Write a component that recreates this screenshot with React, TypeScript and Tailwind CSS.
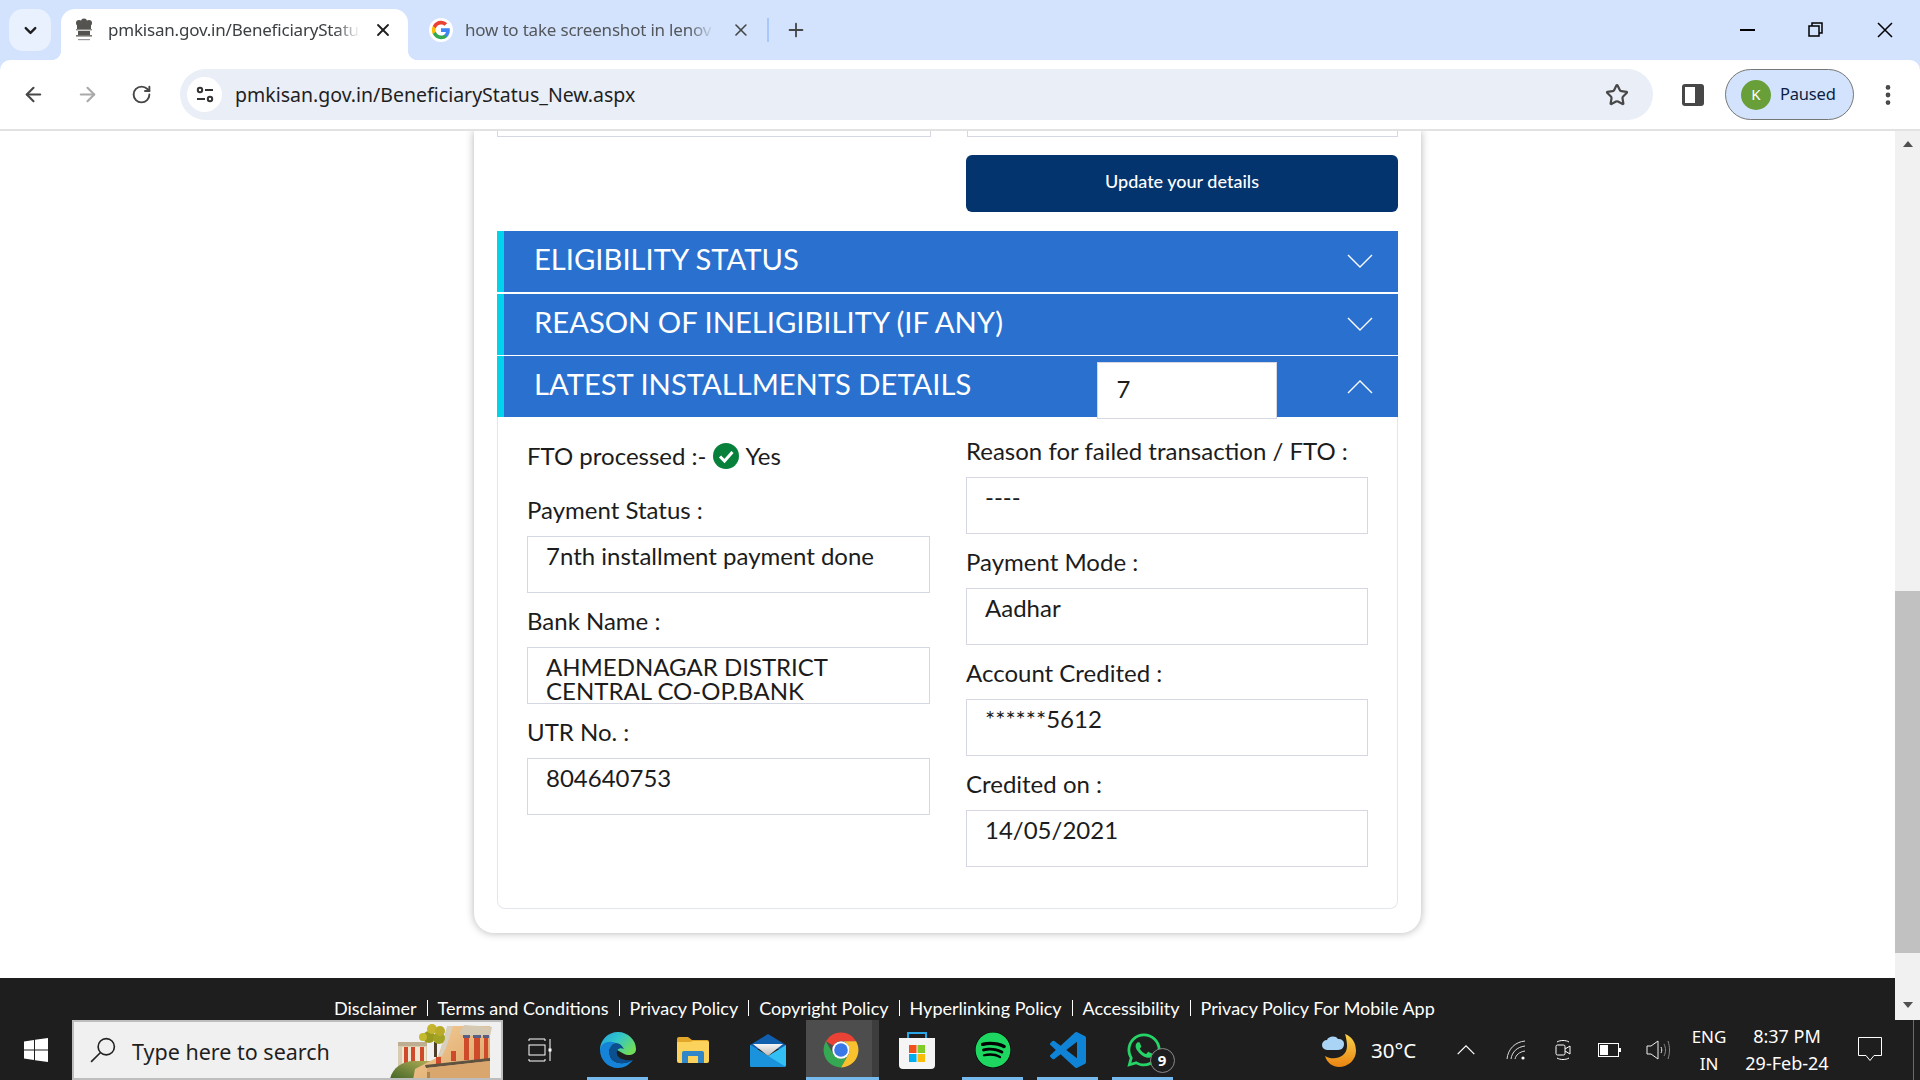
import { ArrowLeft, ArrowRight, ChevronDown, EllipsisVertical, Plus, RotateCw, Star, X } from "lucide-react";
import { FaSpotify, FaWhatsapp } from "react-icons/fa";

const Emblem = () => (
  <svg viewBox="0 0 22 24" className="h-[24px] w-[22px] shrink-0">
    <g fill="#55534f">
      <circle cx="11" cy="3.5" r="3" />
      <circle cx="6" cy="5" r="3" />
      <circle cx="16" cy="5" r="3" />
      <rect x="4" y="6" width="14" height="5" />
      <rect x="3" y="11" width="16" height="1.4" fill="#8a8a86" />
      <rect x="5" y="13" width="12" height="4" />
      <rect x="3" y="17" width="16" height="1.6" fill="#77756f" />
      <rect x="5" y="21" width="12" height="1.2" fill="#999" />
    </g>
  </svg>
);

const GoogleG = () => (
  <span className="flex h-[24px] w-[24px] shrink-0 items-center justify-center rounded-full bg-white">
    <svg viewBox="0 0 24 24" className="h-[20px] w-[20px]">
      <path fill="#4285F4" d="M22.56 12.25c0-.78-.07-1.53-.2-2.25H12v4.26h5.92c-.26 1.37-1.04 2.53-2.21 3.31v2.77h3.57c2.08-1.92 3.28-4.74 3.28-8.09z" />
      <path fill="#34A853" d="M12 23c2.97 0 5.46-.98 7.28-2.66l-3.57-2.77c-.98.66-2.23 1.06-3.71 1.06-2.86 0-5.29-1.93-6.16-4.53H2.18v2.84C3.99 20.53 7.7 23 12 23z" />
      <path fill="#FBBC05" d="M5.84 14.09c-.22-.66-.35-1.36-.35-2.09s.13-1.43.35-2.09V7.07H2.18C1.43 8.55 1 10.22 1 12s.43 3.45 1.18 4.93l2.85-2.22.81-.62z" />
      <path fill="#EA4335" d="M12 5.38c1.62 0 3.06.56 4.21 1.64l3.15-3.15C17.45 2.09 14.97 1 12 1 7.7 1 3.99 3.47 2.18 7.07l3.66 2.84c.87-2.6 3.3-4.53 6.16-4.53z" />
    </svg>
  </span>
);

const TabStrip = () => (
  <div className="flex h-[60px] shrink-0 items-start bg-[#d3e3fd] pl-[9px] pt-[9px] font-['Noto_Sans',sans-serif] text-[#444746]">
    <div className="flex h-[42px] w-[42px] items-center justify-center rounded-[14px] bg-[#e9f1fe]">
      <ChevronDown size={19} strokeWidth={3} className="text-[#1f1f1f]" />
    </div>
    <div className="relative ml-[10px] flex h-[51px] w-[347px] items-center rounded-t-[14px] bg-white pb-[9px] pl-[12px]">
      <span className="absolute bottom-0 left-[-10px] h-[10px] w-[10px] bg-[radial-gradient(circle_at_0_0,transparent_10px,white_10.5px)]" />
      <span className="absolute bottom-0 right-[-10px] h-[10px] w-[10px] bg-[radial-gradient(circle_at_100%_0,transparent_10px,white_10.5px)]" />
      <Emblem />
      <span className="ml-[13px] w-[252px] whitespace-nowrap text-[17px] tracking-[-0.2px] text-[#3c4043] [mask-image:linear-gradient(to_right,black_90%,transparent)]">
        pmkisan.gov.in/BeneficiaryStatu
      </span>
      <X size={20} strokeWidth={2.2} className="ml-[13px] text-[#1f1f1f]" />
    </div>
    <div className="flex h-[42px] w-[361px] items-center pl-[21px]">
      <GoogleG />
      <span className="ml-[12px] w-[251px] whitespace-nowrap text-[17px] tracking-[-0.2px] text-[#54575b] [mask-image:linear-gradient(to_right,black_90%,transparent)]">
        how to take screenshot in lenov
      </span>
      <X size={20} strokeWidth={2} className="ml-[17px] text-[#444746]" />
      <span className="ml-[16px] h-[24px] w-[2px] bg-[#a8c7fa]" />
    </div>
    <div className="flex h-[42px] items-center pl-[16px]">
      <Plus size={22} strokeWidth={2} className="text-[#444746]" />
    </div>
    <div className="ml-auto flex h-[41px] items-center pr-[27px]">
      <span className="h-[2px] w-[15px] bg-black" />
      <svg viewBox="0 0 15 15" className="ml-[53px] h-[15px] w-[15px]" fill="none" stroke="black" strokeWidth="1.5">
        <rect x="1" y="4" width="10" height="10" />
        <path d="M4 4V1h10v10h-3" />
      </svg>
      <svg viewBox="0 0 16 16" className="ml-[54px] h-[16px] w-[16px]" fill="none" stroke="black" strokeWidth="1.5">
        <path d="M1 1l14 14M15 1L1 15" />
      </svg>
    </div>
  </div>
);

const Toolbar = () => (
  <div className="flex h-[71px] shrink-0 items-start bg-[#d3e3fd] font-['Noto_Sans',sans-serif]">
    <div className="flex h-[71px] w-full items-start rounded-t-[10px] border-b-2 border-[#e2e2e2] bg-white pt-[9px]">
      <div className="flex h-[51px] items-center pl-[22px]">
        <ArrowLeft size={23} strokeWidth={2.2} className="text-[#474747]" />
        <ArrowRight size={23} strokeWidth={2.2} className="ml-[31px] text-[#a9a9a9]" />
        <RotateCw size={21} strokeWidth={2.2} className="ml-[32px] text-[#474747]" />
      </div>
      <div className="ml-[28px] flex h-[51px] w-[1473px] items-center rounded-full bg-[#eaeef7] pl-[7px] pr-[24px]">
        <span className="flex h-[35px] w-[35px] items-center justify-center rounded-full bg-white">
          <svg viewBox="0 0 20 20" className="h-[20px] w-[20px]" fill="none" stroke="#333" strokeWidth="2">
            <circle cx="5" cy="5" r="2.2" />
            <path d="M10 5h8M2 14h8" />
            <circle cx="15" cy="14" r="2.2" />
          </svg>
        </span>
        <span className="ml-[13px] whitespace-nowrap text-[19.5px] text-[#1f1f1f]">pmkisan.gov.in/BeneficiaryStatus_New.aspx</span>
        <Star size={24} strokeWidth={2.2} className="ml-auto text-[#474747]" />
      </div>
      <div className="flex h-[51px] items-center">
        <svg viewBox="0 0 22 22" className="ml-[29px] h-[22px] w-[22px]">
          <rect x="0" y="0" width="22" height="22" rx="3" fill="#474747" />
          <rect x="3" y="3" width="10" height="16" fill="white" />
        </svg>
        <div className="ml-[21px] flex h-[51px] w-[129px] items-center rounded-full border border-[#747775] bg-[#d3e3fd] pl-[15px]">
          <span className="flex h-[30px] w-[30px] items-center justify-center rounded-full bg-[#689f38] text-[15px] text-white">K</span>
          <span className="ml-[9px] text-[16.5px] tracking-[-0.2px] text-[#0b1d43]">Paused</span>
        </div>
        <EllipsisVertical size={26} strokeWidth={2.4} className="ml-[21px] text-[#474747]" />
      </div>
    </div>
  </div>
);

const Field = ({ label, children }: { label: string; children: React.ReactNode }) => (
  <div className="mb-[15px]">
    <div className="mb-[9px] h-[30px] text-[24px] leading-[26px] text-[#1c1c1c]">{label}</div>
    <div className="h-[57px] overflow-hidden border border-[#d5d8e3] pl-[18px] pt-[7px] text-[24px] leading-[24px] text-[#1c1c1c]">
      {children}
    </div>
  </div>
);

const Chevron = ({ up, small }: { up?: boolean; small?: boolean }) => (
  <svg viewBox="0 0 26 14" className={small ? "h-[10px] w-[18px]" : "h-[14px] w-[26px]"} fill="none" stroke="white" strokeWidth={small ? 1.8 : 1.4}>
    <path d={up ? "M1 13L13 1l12 12" : "M1 1l12 12L25 1"} />
  </svg>
);

const AccordionRow = ({ title, open, children }: { title: string; open?: boolean; children?: React.ReactNode }) => (
  <div className="flex h-[61px] items-center border-l-[7px] border-[#00d4ec] bg-[#2970cf] pl-[30px] text-white">
    <span className="pb-[6px] text-[29.2px] leading-none">{title}</span>
    {children}
    <span className={`ml-auto pr-[25px] ${open ? "" : "pb-[2px]"}`}>
      <Chevron up={open} />
    </span>
  </div>
);

const PageCard = () => (
  <div className="ml-[474px] w-[947px] rounded-b-[20px] bg-white px-[23px] pb-[24px] shadow-[0_0_8px_rgba(0,0,0,0.3)]">
    <div className="flex gap-[36px]">
      <div className="h-[6px] w-[434px] border-x border-b border-[#d5d8e3]" />
      <div className="h-[6px] w-[432px] border-x border-b border-[#d5d8e3]" />
    </div>
    <div className="mt-[18px] flex justify-end">
      <div className="flex h-[57px] w-[432px] items-center justify-center rounded-[6px] bg-[#03346e] pb-[5px] text-[18px] font-medium text-white">Update your details</div>
    </div>
    <div className="mt-[19px]">
      <AccordionRow title="ELIGIBILITY STATUS" />
      <div className="h-[2px]" />
      <AccordionRow title="REASON OF INELIGIBILITY (IF ANY)" />
      <div className="h-px" />
      <AccordionRow title="LATEST INSTALLMENTS DETAILS" open>
        <div className="relative ml-[126px] h-[57px] w-[180px] translate-y-[4px] border border-[#d5d8e3] bg-white pl-[18px] pt-[10px] text-[24px] leading-[32px] text-[#1c1c1c]">7</div>
      </AccordionRow>
    </div>
    <div className="flex gap-[36px] rounded-b-[8px] border-x border-b border-[#e3e6ec] pb-[26px] pl-[29px]">
      <div className="w-[403px] pt-[23px]">
        <div className="mb-[25px] flex h-[32px] items-center text-[24px] text-[#1c1c1c]">
          <span>FTO processed :-</span>
          <svg viewBox="0 0 26 26" className="ml-[6px] h-[26px] w-[26px]">
            <circle cx="13" cy="13" r="13" fill="#07803c" />
            <path d="M7 13.5l4.5 4.5L19.5 9" fill="none" stroke="white" strokeWidth="3" />
          </svg>
          <span className="ml-[7px]">Yes</span>
        </div>
        <Field label="Payment Status :">7nth installment payment done</Field>
        <Field label="Bank Name :">AHMEDNAGAR DISTRICT CENTRAL CO-OP.BANK</Field>
        <Field label="UTR No. :">804640753</Field>
      </div>
      <div className="w-[402px] pt-[21px]">
        <Field label="Reason for failed transaction / FTO :">----</Field>
        <Field label="Payment Mode :">Aadhar</Field>
        <Field label="Account Credited :">******5612</Field>
        <Field label="Credited on :">14/05/2021</Field>
      </div>
    </div>
  </div>
);

const footerLinks = ["Disclaimer", "Terms and Conditions", "Privacy Policy", "Copyright Policy", "Hyperlinking Policy", "Accessibility", "Privacy Policy For Mobile App"];

const Footer = () => (
  <div className="mt-auto flex h-[42px] items-end bg-[#1e1e1e] pl-[334px] text-[18px] leading-[24px] text-white">
    {footerLinks.map((link, i) => (
      <span key={link} className="flex items-center whitespace-nowrap">
        {i > 0 && <span className="mx-[10px] h-[16px] w-px bg-white" />}
        {link}
      </span>
    ))}
  </div>
);

const Scrollbar = () => (
  <div className="flex w-[25px] shrink-0 flex-col items-center bg-[#f1f1f1] pt-[10px]">
    <span className="h-0 w-0 border-x-[5px] border-b-[6px] border-x-transparent border-b-[#505050]" />
    <div className="mt-[444px] h-[362px] w-full bg-[#c1c1c1]" />
    <span className="mt-[49px] h-0 w-0 border-x-[5px] border-t-[6px] border-x-transparent border-t-[#505050]" />
  </div>
);

const SearchArt = () => (
  <svg viewBox="0 2 102 56" className="h-[56px] w-[102px]">
    <defs>
      <linearGradient id="hill" x1="0" y1="1" x2="1" y2="0">
        <stop offset="0" stopColor="#3f6425" />
        <stop offset="1" stopColor="#b3ae57" />
      </linearGradient>
      <linearGradient id="wall" x1="0" y1="0" x2="1" y2="1">
        <stop offset="0" stopColor="#f4cd96" />
        <stop offset="1" stopColor="#dba468" />
      </linearGradient>
    </defs>
    <rect x="8" y="22" width="29" height="28" fill="#d8cbb0" />
    <rect x="8" y="22" width="29" height="4" fill="#bdae92" />
    <rect x="12" y="27" width="24" height="20" fill="#efe6d2" />
    <rect x="14" y="27" width="4" height="16" fill="#cf4a2b" />
    <rect x="21" y="27" width="4" height="16" fill="#cf4a2b" />
    <rect x="30" y="27" width="4" height="16" fill="#cf4a2b" />
    <path d="M0 60C1 49 12 41 24 41h18l-6 9-10 10z" fill="url(#hill)" />
    <path d="M23 60l2-11 23-12 10-31h42v54z" fill="url(#wall)" />
    <path d="M49 36l8-30h6l-7 22-4 8z" fill="#d9cfbd" />
    <path d="M69 13l5-8 28 2-2 9-26 0z" fill="#d5c9b2" />
    <rect x="74" y="15" width="5" height="25" fill="#cf4a2b" />
    <rect x="84" y="15" width="6" height="25" fill="#cf4a2b" />
    <rect x="94" y="15" width="4" height="25" fill="#cf4a2b" />
    <rect x="73" y="15" width="7" height="3" fill="#5a5f86" />
    <rect x="83" y="15" width="8" height="3" fill="#5a5f86" />
    <rect x="93" y="15" width="6" height="3" fill="#5a5f86" />
    <rect x="61" y="31" width="5" height="10" fill="#cf4a2b" />
    <rect x="46" y="37" width="5" height="7" fill="#cf4a2b" />
    <path d="M35 45l65-7v3l-64 7z" fill="#5f5240" />
    <path d="M37 48l63-7v19H37z" fill="#d9a66d" />
    <rect x="37" y="52" width="3" height="8" fill="#a98457" />
    <rect x="44" y="22" width="3" height="15" fill="#4d3f2c" />
    <circle cx="39" cy="17" r="6" fill="#9a9a1e" />
    <circle cx="49" cy="18" r="6" fill="#a2a322" />
    <circle cx="42" cy="9" r="5" fill="#c5b42d" />
    <circle cx="50" cy="11" r="5" fill="#b9ab28" />
    <circle cx="33" cy="17" r="4" fill="#c4b92f" />
  </svg>
);

const Slot = ({ width, active, underline, children }: { width: string; active?: boolean; underline?: boolean; children: React.ReactNode }) => (
  <div className={`relative flex h-[60px] items-center justify-center ${width} ${active ? "bg-[#4d4d4d]" : ""}`}>
    {children}
    {underline && <span className="absolute inset-x-0 bottom-0 h-[3px] bg-[#76b9ed]" />}
  </div>
);

const EdgeIcon = () => (
  <svg viewBox="0 0 36 36" className="h-[36px] w-[36px]">
    <defs>
      <linearGradient id="edgeTop" x1="0" y1="0" x2="1" y2="0.6">
        <stop offset="0" stopColor="#1f9fe0" />
        <stop offset="0.5" stopColor="#33c6c9" />
        <stop offset="1" stopColor="#6fdc5c" />
      </linearGradient>
    </defs>
    <path d="M0 18C0 8 8 0 18 0c10 0 18 8 18 17 0 4-3 6-8 6-5 0-10-6-14-6-6 0-14 0-14 1z" fill="url(#edgeTop)" />
    <path d="M0 18C1 10 9 8 16 11C10 12 8 18 10 24C12 31 22 34 33 28C29 33 24 36 18 36C8 36 0 28 0 18z" fill="#1583d8" />
    <path d="M16 11C10 12 8 18 10 24C12 31 22 34 33 28C25 29 18 27 17 22C16 17 20 15 24 17C22 13 19 11 16 11z" fill="#0c4f8f" />
  </svg>
);

const FolderIcon = () => (
  <svg viewBox="0 0 32 26" className="h-[26px] w-[32px]">
    <path d="M0 2a2 2 0 0 1 2-2h9l4 3H30a2 2 0 0 1 2 2v3H0z" fill="#e2a72a" />
    <path d="M0 5h13l3-1h14a2 2 0 0 1 2 2v18a2 2 0 0 1-2 2H2a2 2 0 0 1-2-2z" fill="#fbd35c" />
    <path d="M5 26V16a2 2 0 0 1 2-2h18a2 2 0 0 1 2 2v10z" fill="#2f86c8" />
    <rect x="11" y="19" width="10" height="7" fill="#fbd35c" />
  </svg>
);

const MailIcon = () => (
  <svg viewBox="0 0 36 33" className="h-[33px] w-[36px]">
    <defs>
      <linearGradient id="paper" x1="0" y1="0" x2="0" y2="1">
        <stop offset="0" stopColor="#f5f5f5" />
        <stop offset="1" stopColor="#b9b9b9" />
      </linearGradient>
    </defs>
    <path d="M18 0l18 11v4H0v-4z" fill="#0f5fae" />
    <path d="M3 10h30L18 22z" fill="url(#paper)" />
    <path d="M0 11l18 11 18-11v20a2 2 0 0 1-2 2H2a2 2 0 0 1-2-2z" fill="#32bff3" />
    <path d="M0 11l36 22H2a2 2 0 0 1-2-2z" fill="#1a92dc" />
  </svg>
);

const ChromeIcon = () => (
  <svg viewBox="0 0 48 48" className="ml-[4px] h-[38px] w-[38px]">
    <path fill="#ea4335" d="M24 2a22 22 0 0 1 19.05 11H24a11 11 0 0 0-9.53 5.5L4.95 13A22 22 0 0 1 24 2z" />
    <path fill="#34a853" d="M4.95 13A22 22 0 0 0 24 46l9.53-16.5a11 11 0 0 1-19.06 0z" />
    <path fill="#fbc02d" d="M43.05 13H24a11 11 0 0 1 9.53 16.5L24 46a22 22 0 0 0 19.05-33z" />
    <circle cx="24" cy="24" r="11" fill="white" />
    <circle cx="24" cy="24" r="8.6" fill="#3b78e7" />
  </svg>
);

const StoreIcon = () => (
  <svg viewBox="0 0 36 38" className="h-[38px] w-[36px]">
    <path d="M9 8V2h18v6" fill="none" stroke="#2aa6e6" strokeWidth="2" />
    <path d="M0 7h36v27a4 4 0 0 1-4 4H4a4 4 0 0 1-4-4z" fill="#f5f5f5" />
    <rect x="10" y="14" width="7.5" height="8" fill="#f1511b" />
    <rect x="18.5" y="14" width="7.5" height="8" fill="#80cc28" />
    <rect x="10" y="23" width="7.5" height="8" fill="#00adef" />
    <rect x="18.5" y="23" width="7.5" height="8" fill="#fbbc09" />
  </svg>
);

const CodeIcon = () => (
  <svg viewBox="0 0 24 24" className="h-[36px] w-[36px]" fill="#0f83d6">
    <path d="M23.15 2.587L18.21.21a1.494 1.494 0 0 0-1.705.29l-9.46 8.63-4.12-3.128a.999.999 0 0 0-1.276.057L.327 7.261A1 1 0 0 0 .326 8.74L3.899 12 .326 15.26a1 1 0 0 0 .001 1.479L1.65 17.94a.999.999 0 0 0 1.276.057l4.12-3.128 9.46 8.63a1.492 1.492 0 0 0 1.704.29l4.942-2.377A1.5 1.5 0 0 0 24 20.06V3.939a1.5 1.5 0 0 0-.85-1.352zm-5.146 14.861L10.826 12l7.178-5.448v10.896z" />
  </svg>
);

const TrayIcons = () => (
  <div className="flex h-[60px] items-center text-white">
    <svg viewBox="0 0 36 36" className="h-[36px] w-[36px]">
      <defs>
        <linearGradient id="moon" x1="0" y1="0" x2="0" y2="1">
          <stop offset="0" stopColor="#f8d24a" />
          <stop offset="1" stopColor="#ea8312" />
        </linearGradient>
      </defs>
      <path d="M24 2c8 3 11 10 11 17 0 9-8 16-17 16-6 0-12-4-14-11 8 5 22 2 22-10 0-4-1-9-2-12z" fill="url(#moon)" />
      <path d="M6 18a5 5 0 0 1 0-10c1-4 9-5 11-1 4 0 6 2 6 5s-2 6-6 6z" fill="#a9d4f5" />
    </svg>
    <span className="ml-[14px] w-[78px] text-[20.5px]">30°C</span>
    <span className="ml-[8px] flex w-[18px] items-center"><Chevron up small /></span>
    <svg viewBox="0 0 20 20" className="ml-[31px] h-[20px] w-[20px]" fill="none" stroke="#ddd" strokeWidth="1">
      <path d="M1 19C2 9 9 2 19 1M5 19c1-7 6-12 14-13M9 19c1-4 4-7 10-8" />
      <circle cx="17" cy="18" r="1.6" fill="white" stroke="none" />
    </svg>
    <svg viewBox="0 0 18 24" className="ml-[28px] h-[24px] w-[18px]" fill="none" stroke="white" strokeWidth="1">
      <rect x="2" y="7" width="9" height="10" rx="1.5" />
      <path d="M11 11l5-3v8l-5-3M3 4c3-2 9-2 12 0M3 20c3 2 9 2 12 0" />
    </svg>
    <svg viewBox="0 0 23 14" className="ml-[26px] h-[14px] w-[23px]">
      <rect x="0.5" y="0.5" width="20" height="13" fill="none" stroke="white" />
      <rect x="2" y="2" width="8" height="10" fill="white" />
      <rect x="21" y="5" width="2" height="4" fill="white" />
    </svg>
    <svg viewBox="0 0 24 22" className="ml-[25px] h-[22px] w-[24px]" fill="none" stroke="#eee" strokeWidth="1">
      <path d="M1 7h4l7-5v18l-7-5H1zM15 8c1 2 1 4 0 6" />
      <path d="M18 5c2 4 2 8 0 12M22 2c2 6 2 12 0 18" stroke="#888" />
    </svg>
    <div className="ml-[21px] flex w-[36px] flex-col items-center text-[17px] leading-[27px]">
      <span>ENG</span>
      <span>IN</span>
    </div>
    <div className="ml-[16px] flex w-[88px] flex-col items-center text-[18px] leading-[27px]">
      <span>8:37 PM</span>
      <span>29-Feb-24</span>
    </div>
    <svg viewBox="0 0 24 26" className="ml-[27px] h-[26px] w-[24px]" fill="none" stroke="white" strokeWidth="1">
      <path d="M0.5 0.5h23v18H16l-4 5-4-5H0.5z" />
    </svg>
    <span className="ml-[31px] h-[60px] w-px bg-[#6a6a6a]" />
  </div>
);

const Taskbar = () => (
  <div className="flex h-[60px] shrink-0 items-center bg-[#1e1e1e] font-['Noto_Sans',sans-serif]">
    <div className="flex w-[72px] justify-center pr-[1px]">
      <svg viewBox="0 0 24 24" className="h-[24px] w-[24px]" fill="white">
        <path d="M0 3.4l10-1.4v9.4H0zM11 1.8L24 0v11.4H11zM0 12.5h10V22L0 20.6zM11 12.5h13V24l-13-1.8z" />
      </svg>
    </div>
    <div className="flex h-[60px] w-[431px] items-center border-x-2 border-y-2 border-[#bdbdbd] bg-[#f0f0f0] pl-[16px] text-[#1f1f1f]">
      <svg viewBox="0 0 24 24" className="h-[26px] w-[26px]" fill="none" stroke="#222" strokeWidth="1.5">
        <circle cx="15" cy="9" r="7.5" />
        <path d="M9.5 14.5L1 23" />
      </svg>
      <span className="ml-[16px] whitespace-nowrap pt-[4px] text-[21.5px]">Type here to search</span>
      <div className="ml-auto flex h-full items-end pr-[9px]">
        <SearchArt />
      </div>
    </div>
    <div className="flex w-[84px] justify-center pr-[11px]">
      <svg viewBox="0 0 24 24" className="h-[24px] w-[24px]" fill="none" stroke="white" strokeWidth="1">
        <path d="M1 3V1h16v2M1 21v2h16v-2M22 1v22" />
        <rect x="1" y="7" width="16" height="10" />
        <rect x="20.5" y="10.5" width="3" height="3" fill="white" stroke="none" />
      </svg>
    </div>
    <Slot width="w-[61px]" underline><EdgeIcon /></Slot>
    <Slot width="w-[61px] pl-[28px]"><FolderIcon /></Slot>
    <Slot width="w-[97px] pl-[20px]"><MailIcon /></Slot>
    <div className="flex">
      <Slot width="w-[66px]" active underline><ChromeIcon /></Slot>
      <div className="relative h-[60px] w-[7px] bg-[#3d3d3d]"><span className="absolute inset-x-0 bottom-0 h-[3px] bg-[#76b9ed]" /></div>
    </div>
    <Slot width="w-[75px]"><StoreIcon /></Slot>
    <div className="ml-[8px]"><Slot width="w-[61px]" underline><span className="rounded-full bg-black"><FaSpotify size={36} color="#1ed760" /></span></Slot></div>
    <div className="ml-[14px]"><Slot width="w-[61px]" underline><CodeIcon /></Slot></div>
    <div className="ml-[14px]">
      <Slot width="w-[61px]" underline>
        <span className="relative ml-[2px]">
          <FaWhatsapp size={38} color="#25d366" />
          <span className="absolute left-[25px] top-[17px] flex h-[25px] w-[25px] items-center justify-center rounded-full border border-[#8a8a8a] bg-[#1e1e1e] text-[15px] font-bold text-white">9</span>
        </span>
      </Slot>
    </div>
    <div className="ml-[148px]">
      <TrayIcons />
    </div>
  </div>
);

export default function App() {
  return (
    <div className="flex h-screen w-screen flex-col overflow-hidden bg-white">
      <TabStrip />
      <Toolbar />
      <div className="flex h-[889px] shrink-0">
        <div className="flex flex-1 flex-col overflow-hidden font-['Lato',sans-serif]">
          <PageCard />
          <Footer />
        </div>
        <Scrollbar />
      </div>
      <Taskbar />
    </div>
  );
}
